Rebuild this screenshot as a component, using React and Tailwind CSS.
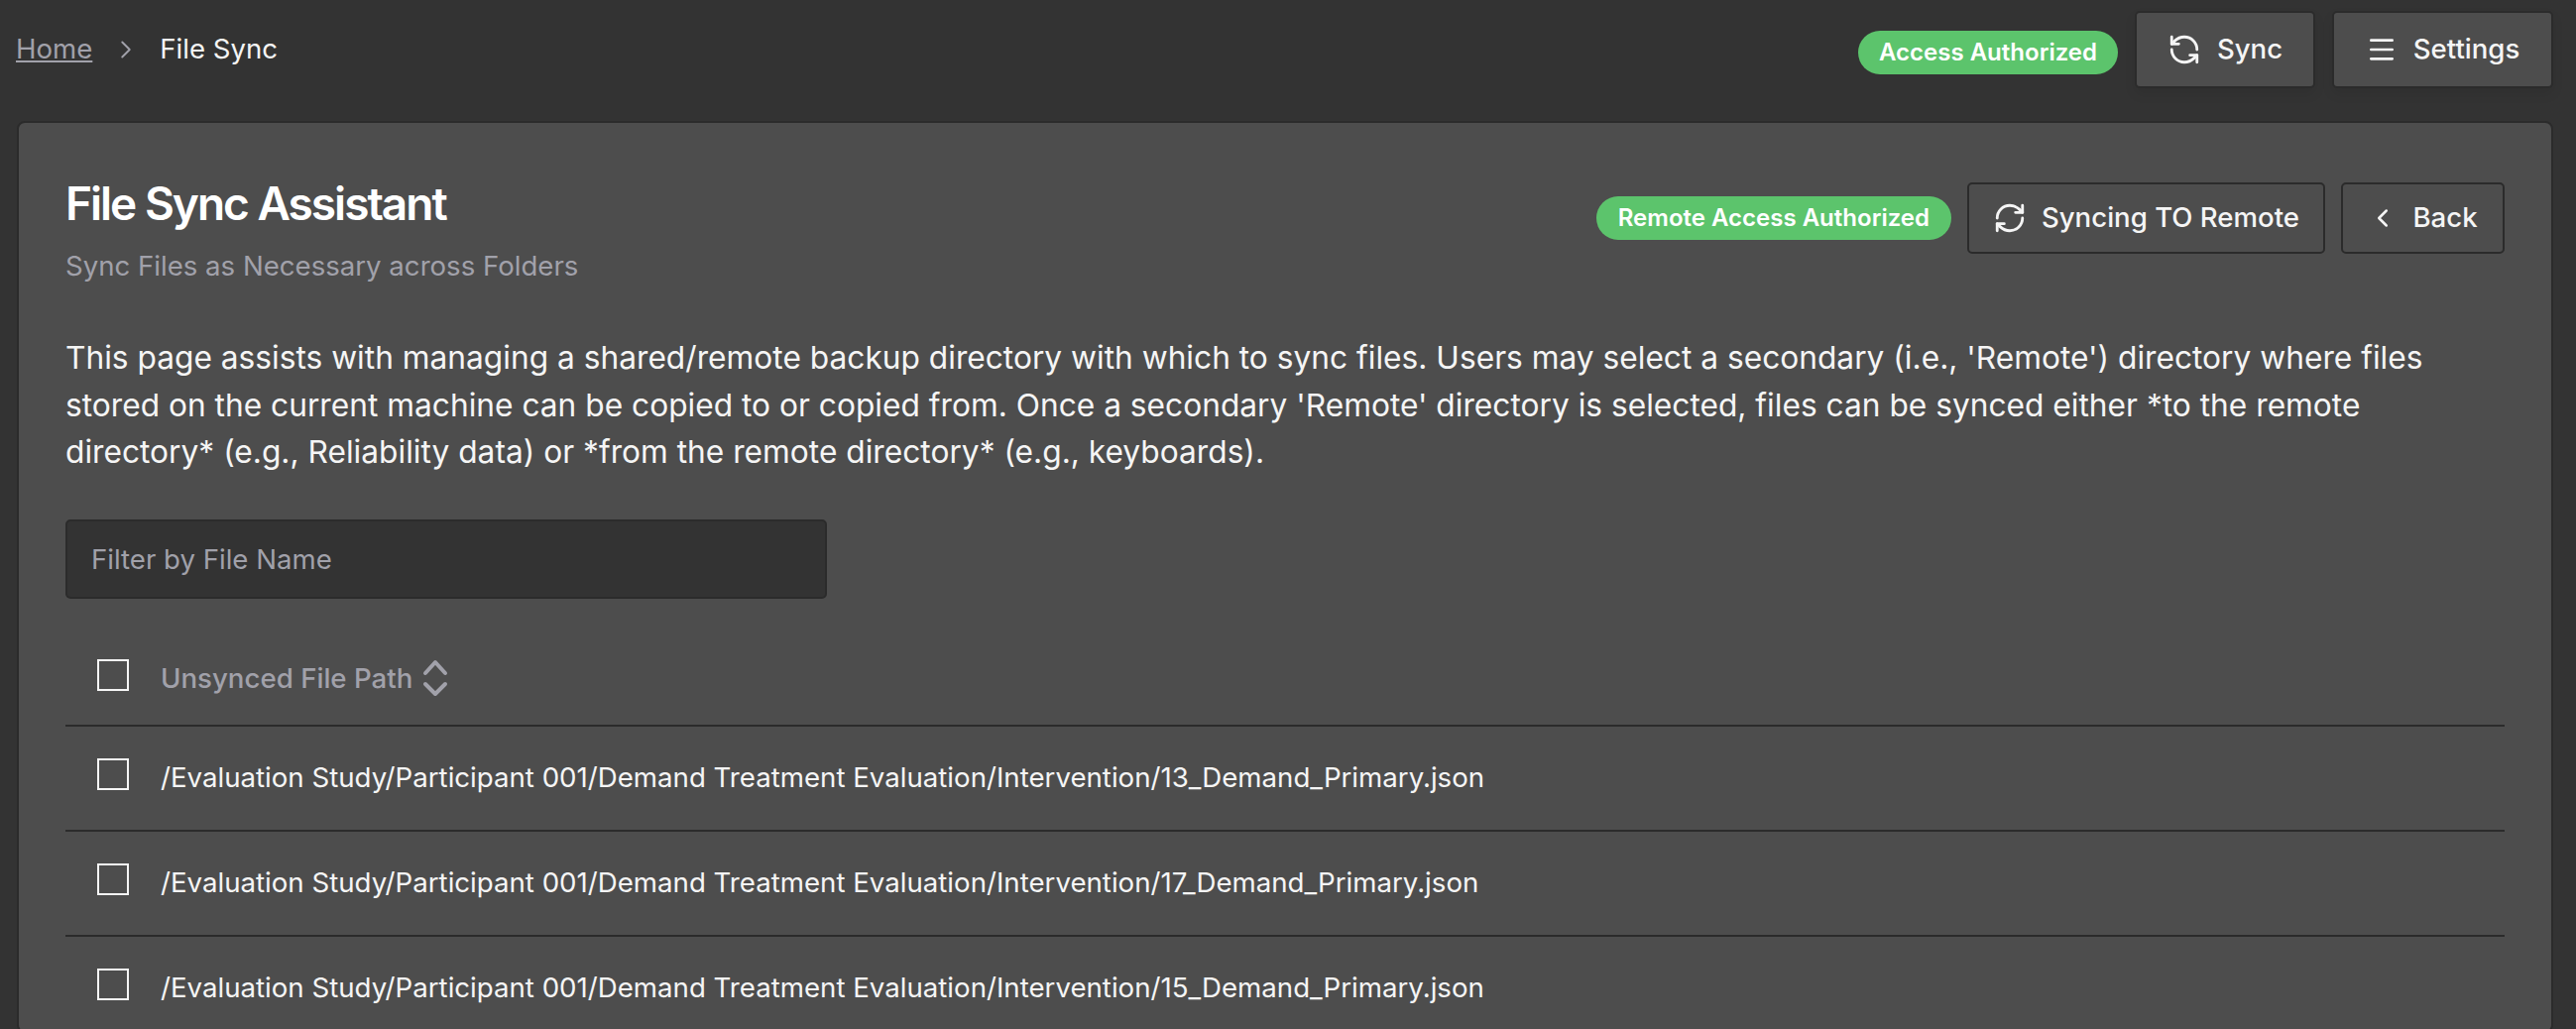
import React from 'react';
import { ChevronRight, ChevronLeft, RefreshCcw, RefreshCw, Menu } from 'lucide-react';

const rows = [
  '/Evaluation Study/Participant 001/Demand Treatment Evaluation/Intervention/13_Demand_Primary.json',
  '/Evaluation Study/Participant 001/Demand Treatment Evaluation/Intervention/17_Demand_Primary.json',
  '/Evaluation Study/Participant 001/Demand Treatment Evaluation/Intervention/15_Demand_Primary.json',
];

function Box() {
  return <span className="block w-[32px] h-[32px] mb-[8px] border-2 border-[#f5f5f5] shrink-0" />;
}

export default function App() {
  return (
    <div className="h-[1038px] overflow-hidden bg-[#333333] text-[#f5f5f5] font-['Inter',sans-serif]">
      <header className="h-[122px] flex items-start justify-between pl-[16px] pr-[23px]">
        <nav className="flex items-center gap-[19px] text-[27.6px] h-[100px]">
          <a className="underline text-[#a1a1aa]">Home</a>
          <ChevronRight size={30} strokeWidth={1.5} className="text-[#a1a1aa]" />
          <span>File Sync</span>
        </nav>
        <div className="flex items-center gap-[17px] pt-[11px]">
          <span className="h-[44px] mt-[6px] px-[21px] flex items-center rounded-full bg-[#5cc46c] text-white text-[24px] font-semibold">Access Authorized</span>
          <button className="h-[78px] w-[182px] flex items-center justify-center gap-[16px] bg-[#4d4d4d] border-2 border-[#2b2b2b] rounded-[5px] text-[27.6px] font-medium shadow-[0_6px_12px_rgba(0,0,0,0.08)]">
            <RefreshCcw size={34} strokeWidth={2} />Sync
          </button>
          <button className="h-[78px] w-[223px] flex items-center justify-center gap-[16px] bg-[#4d4d4d] border-2 border-[#2b2b2b] rounded-[5px] text-[27.6px] font-medium shadow-[0_6px_12px_rgba(0,0,0,0.08)]">
            <Menu size={32} strokeWidth={2} />Settings
          </button>
        </div>
      </header>
      <main className="ml-[17px] mr-[23px] h-[920px] bg-[#4d4d4d] border-2 border-[#2b2b2b] rounded-[8px] px-[47px] pt-[50px]">
        <div className="flex items-start justify-between">
          <div>
            <h1 className="text-[46px] leading-[62px] font-semibold tracking-[-2px] text-white">File Sync Assistant</h1>
            <p className="text-[27.6px] leading-[40px] mt-[12px] text-[#a1a1aa]">Sync Files as Necessary across Folders</p>
          </div>
          <div className="flex items-center gap-[16px] pt-[10px]">
            <span className="h-[44px] px-[22px] flex items-center rounded-full bg-[#5cc46c] text-white text-[24px] font-semibold">Remote Access Authorized</span>
            <button className="h-[72px] w-[361px] flex items-center justify-center gap-[15px] border-2 border-[#2b2b2b] rounded-[5px] text-[27.6px] font-medium">
              <RefreshCw size={34} strokeWidth={2} />Syncing TO Remote
            </button>
            <button className="h-[72px] w-[165px] flex items-center justify-center gap-[15px] border-2 border-[#2b2b2b] rounded-[5px] text-[27.6px] font-medium">
              <ChevronLeft size={30} strokeWidth={2} />Back
            </button>
          </div>
        </div>
        <p className="mt-[49px] text-[31.7px] leading-[47.5px]">
          This page assists with managing a shared/remote backup directory with which to sync files. Users may select a secondary (i.e., 'Remote') directory where files stored on the current machine can be copied to or copied from. Once a secondary 'Remote' directory is selected, files can be synced either *to the remote directory* (e.g., Reliability data) or *from the remote directory* (e.g., keyboards).
        </p>
        <input
          placeholder="Filter by File Name"
          className="mt-[44px] block w-[768px] h-[80px] px-[24px] bg-[#333333] border-2 border-[#2b2b2b] rounded-[5px] text-[27.6px] placeholder:text-[#a1a1aa] outline-none"
        />
        <div className="mt-[23px] h-[106px] pt-[12px] flex items-center border-b-2 border-[#2b2b2b] pl-[32px] gap-[32px]">
          <Box />
          <span className="flex items-center gap-[10px] text-[27.65px] font-medium text-[#a1a1aa]">
            Unsynced File Path
            <svg width="26" height="38" viewBox="0 0 26 38" fill="none" stroke="currentColor" strokeWidth="4" strokeLinecap="round" strokeLinejoin="round">
              <polyline points="3,14 13,3 23,14" />
              <polyline points="3,25 13,35 23,25" />
            </svg>
          </span>
        </div>
        {rows.map((r) => (
          <div key={r} className="h-[106px] flex items-center border-b-2 border-[#2b2b2b] pl-[32px] gap-[32px] text-[27.65px]">
            <Box />
            <span>{r}</span>
          </div>
        ))}
      </main>
    </div>
  );
}
